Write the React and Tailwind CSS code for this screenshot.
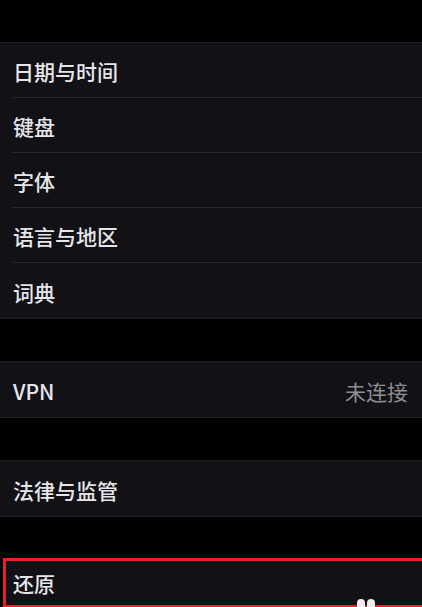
import React from 'react';

const font = { fontFamily: '"Noto Sans CJK SC", "Noto Sans", sans-serif' };

const generalRows = ['日期与时间', '键盘', '字体', '语言与地区', '词典'];

const Row = ({ label, value, last }) => (
  <div className="pl-[13px]">
    <div
      className={`flex h-[55px] items-center justify-between pr-[14px] pt-[4px] ${
        last ? '' : 'border-b border-[#2a292e]'
      }`}
    >
      <span className="text-[21px] font-medium text-[#e6e6ea]">{label}</span>
      {value && <span className="text-[21px] text-[#8d8d92]">{value}</span>}
    </div>
  </div>
);

const Group = ({ children }) => (
  <div className="border-y border-[#1d1c21] bg-[#121116]">{children}</div>
);

export default function App() {
  return (
    <div className="relative h-[607px] overflow-hidden bg-black pt-[42px]" style={font}>
      <Group>
        {generalRows.map((label, i) => (
          <Row key={label} label={label} last={i === generalRows.length - 1} />
        ))}
      </Group>

      <div className="h-[42px]" />
      <Group>
        <Row label="VPN" value="未连接" last />
      </Group>

      <div className="h-[42px]" />
      <Group>
        <Row label="法律与监管" last />
      </Group>

      <div className="h-[41px]" />
      <div className="ml-[3px] border-[3px] border-r-0 border-[#e8202b] bg-[#121116]">
        <div className="flex h-[44px] items-center pl-[7px] pt-[2px]">
          <span className="text-[21px] font-medium text-[#e6e6ea]">还原</span>
        </div>
      </div>

      <div className="absolute left-[357px] top-[599px] flex gap-[2px]">
        <div className="h-[10px] w-[8px] rounded-t-full bg-[#f2eef0]" />
        <div className="h-[10px] w-[8px] rounded-t-full bg-[#f2eef0]" />
      </div>
    </div>
  );
}
